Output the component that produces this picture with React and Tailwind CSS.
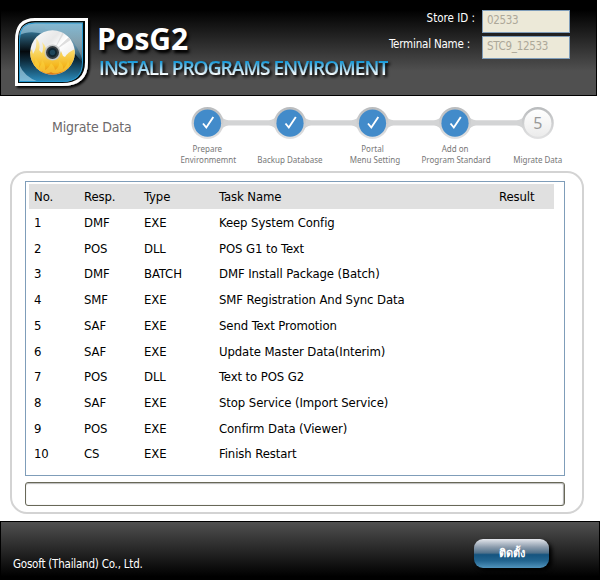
const tasks = [
  ['1', 'DMF', 'EXE', 'Keep System Config'],
  ['2', 'POS', 'DLL', 'POS G1 to Text'],
  ['3', 'DMF', 'BATCH', 'DMF Install Package (Batch)'],
  ['4', 'SMF', 'EXE', 'SMF Registration And Sync Data'],
  ['5', 'SAF', 'EXE', 'Send Text Promotion'],
  ['6', 'SAF', 'EXE', 'Update Master Data(Interim)'],
  ['7', 'POS', 'DLL', 'Text to POS G2'],
  ['8', 'SAF', 'EXE', 'Stop Service (Import Service)'],
  ['9', 'POS', 'EXE', 'Confirm Data (Viewer)'],
  ['10', 'CS', 'EXE', 'Finish Restart'],
];

const steps = [
  ['Prepare', 'Environmemnt', 'pl-[2px]'],
  ['', 'Backup Database', ''],
  ['Portal', 'Menu Setting', 'pl-[5px]'],
  ['Add on', 'Program Standard', 'pl-[2px]'],
  ['', 'Migrate Data', ''],
];

function Logo() {
  return (
    <svg className="h-[76px] w-[80px] shrink-0" viewBox="0 0 80 76">
      <defs>
        <linearGradient id="tile" x1="0" y1="0" x2="0" y2="1">
          <stop offset="0" stopColor="#8fbfd6" />
          <stop offset=".4" stopColor="#5e8ea6" />
          <stop offset=".62" stopColor="#1f4558" />
          <stop offset="1" stopColor="#2a91c7" />
        </linearGradient>
        <linearGradient id="sweep" x1="0" y1="0" x2="0" y2="1">
          <stop offset="0" stopColor="#2f6a88" />
          <stop offset=".38" stopColor="#04090d" />
          <stop offset=".55" stopColor="#0d2a3a" />
          <stop offset="1" stopColor="#2e93c6" />
        </linearGradient>
        <linearGradient id="gloss" x1="0" y1="0" x2="0" y2="1">
          <stop offset="0" stopColor="#7fbad6" />
          <stop offset=".4" stopColor="#8da8b4" />
          <stop offset="1" stopColor="#6d787f" />
        </linearGradient>
        <linearGradient id="fire" x1="0" y1="0" x2="0" y2="1">
          <stop offset="0" stopColor="#fbf0c0" />
          <stop offset=".4" stopColor="#f8d35a" />
          <stop offset=".7" stopColor="#f5b81f" />
          <stop offset=".87" stopColor="#e8901b" />
          <stop offset="1" stopColor="#c04f0c" />
        </linearGradient>
        <linearGradient id="disc" x1="0" y1="0" x2="1" y2="1">
          <stop offset="0" stopColor="#fff" />
          <stop offset=".35" stopColor="#e8e8e8" />
          <stop offset=".5" stopColor="#fff" />
          <stop offset="1" stopColor="#ddd" />
        </linearGradient>
        <clipPath id="tileClip"><path d="M20 4.5H68V44Q68 64 47 64H4V20.5Q4 4.5 20 4.5Z" /></clipPath>
        <clipPath id="discClip"><circle cx="37.5" cy="34.5" r="22.3" /></clipPath>
        <filter id="logoShadow"><feDropShadow dx="2" dy="2" stdDeviation="1.2" floodColor="#000" /></filter>
      </defs>
      <path filter="url(#logoShadow)" d="M20 1.5H71.5V44Q71.5 66.5 47 66.5H1.5V22Q1.5 1.5 20 1.5Z" fill="#050708" stroke="#fff" strokeWidth="3" />
      <g clipPath="url(#tileClip)">
        <rect x="3" y="3" width="66" height="62" fill="url(#tile)" />
        <path d="M3 18Q14 11 32 17Q52 24 60 36Q66 43 70 46V65H3Z" fill="url(#sweep)" />
        <path d="M30 5H69V48Q65 30 54 19Q46 12 30 11Z" fill="url(#gloss)" opacity=".7" />
        <path d="M4 46Q9 59 24 64H4Z" fill="#a9d4e8" opacity=".65" />
        <path d="M4.5 64V21Q4.5 5 20 5H67.5V44Q67.5 63.5 47 63.5H4" fill="none" stroke="#2497d0" />
      </g>
      <circle cx="37.5" cy="34.5" r="22.3" fill="url(#disc)" />
      <g clipPath="url(#discClip)">
        <path d="M38 34L49 11L51 12Z" fill="#dedede" />
        <path d="M38 34L55 18L57 21Z" fill="#dedede" />
        <path d="M14 36L17 31L18 36L20 32Q22 27 21 20Q26 25 24 32L27 35Q29 30 27 24Q32 29 32 37Q34 42 38 42Q42 42 44 38L46 33L48 38L50 39Q53 34 60 31V59H14Z" fill="url(#fire)" />
        <path d="M19 47Q21 44 20 40Q25 44 24 50Q27 46 27 42Q31 47 30 52Q34 50 36 45Q40 49 40 52Q45 49 44 43Q49 47 48 51Q52 48 53 42Q55 46 54 49Q49 54 45 54Q40 57 36 54Q31 57 27 53Q22 54 19 47Z" fill="#fbd03c" opacity=".65" />
      </g>
      <circle cx="37.5" cy="34.5" r="8" fill="#bfc2c2" opacity=".85" />
      <circle cx="37.5" cy="34.5" r="5.5" fill="#10242f" stroke="#363c40" strokeWidth="2" />
      <circle cx="37.5" cy="34.5" r="2.7" fill="#1f455a" />
    </svg>
  );
}

function StepTrack() {
  const centers = [41.5, 124, 206.5, 289, 371.8];
  return (
    <svg className="block h-[34px] w-[413px]" viewBox="0 0 413 34">
      <defs>
        <linearGradient id="ring" x1="0" y1="0" x2="0" y2="1">
          <stop offset="0" stopColor="#b9bbbd" />
          <stop offset="1" stopColor="#e2e2e3" />
        </linearGradient>
        <linearGradient id="pending" x1="0" y1="0" x2="0" y2="1">
          <stop offset="0" stopColor="#fff" />
          <stop offset="1" stopColor="#ebebeb" />
        </linearGradient>
      </defs>
      {centers.slice(0, 4).map((c, i) => (
        <path key={c} d={`M${c + 12} 8Q${c + 16} 14.2 ${c + 21} 14.2H${centers[i + 1] - 21}Q${centers[i + 1] - 16} 14.2 ${centers[i + 1] - 12} 8V26Q${centers[i + 1] - 16} 19.5 ${centers[i + 1] - 21} 19.5H${c + 21}Q${c + 16} 19.5 ${c + 12} 26Z`} fill="#d3d4d5" />
      ))}
      {centers.map((c, i) => (
        <g key={c}>
          <circle cx={c} cy="17" r="16" fill="url(#ring)" />
          <circle cx={c} cy="17.2" r="13.6" fill={i === 4 ? 'url(#pending)' : '#428bca'} />
          {i < 4 && <path d={`M${c - 4.5} 17.5L${c - 1.2} 21.5L${c + 5.8} 11`} fill="none" stroke="#fff" strokeWidth="1.9" />}
        </g>
      ))}
      <text x="371.8" y="22.8" textAnchor="middle" fontFamily="Noto Sans, sans-serif" fontSize="16" fill="#999" className="[font-stretch:normal]">5</text>
    </svg>
  );
}

function Field({ value }) {
  return (
    <div className="flex h-[23px] w-[88px] items-center border border-[#7f9db9] bg-[#ece9d8] px-[4px] pb-[1px] text-[11.5px] tracking-[-0.3px] text-[#aca899]">
      {value}
    </div>
  );
}

export default function App() {
  return (
    <div className="flex h-[580px] w-[600px] flex-col overflow-hidden bg-white font-['DejaVu_Sans_Condensed','DejaVu_Sans',sans-serif] text-[12px] [font-stretch:condensed]">
      <header className="flex h-[96px] w-[597px] items-start border border-black bg-[linear-gradient(#000_0px,#000_9px,#505050_70px,#505050_100%)]">
        <div className="flex pt-[17px] pl-[14px]"><Logo /></div>
        <div className="w-[300px] shrink-0 pt-[20px] pl-[2px] font-['Open_Sans',sans-serif] whitespace-nowrap [font-stretch:normal]">
          <div className="h-[35px] text-[30px] leading-[35px] font-bold text-white [text-shadow:2px_3px_3px_#000]">PosG2</div>
          <div className="[filter:drop-shadow(2px_2px_1.5px_#000)]">
            <div className="w-max bg-[linear-gradient(#1197d8_22%,#fff_78%)] bg-clip-text pl-[2px] text-[19px] leading-[24px] font-semibold tracking-[-0.92px] text-transparent [-webkit-text-stroke:0.2px_transparent]">INSTALL PROGRAMS ENVIROMENT</div>
          </div>
        </div>
        <div className="ml-auto flex shrink-0 flex-col gap-[3px] pt-[9px] pr-[26px] text-white">
          <div className="flex justify-end"><span className="mr-[7px] text-[11.5px] leading-[16px] whitespace-nowrap">Store ID :</span><Field value="02533" /></div>
          <div className="-ml-[20px] flex justify-end"><span className="mr-[12px] text-[11.5px] leading-[16px] tracking-[-0.2px] whitespace-nowrap">Terminal Name :</span><Field value="STC9_12533" /></div>
        </div>
      </header>

      <section className="flex h-[75px] shrink-0">
        <h1 className="w-[166px] shrink-0 pt-[22px] pl-[52px] text-[14px] leading-[18px] tracking-[-0.2px] whitespace-nowrap text-[#6d696b]">Migrate Data</h1>
        <div className="w-[413px] shrink-0 pt-[10px]">
          <StepTrack />
          <div className="grid grid-cols-5 pt-[3px] text-center font-['Noto_Sans',sans-serif] text-[8px] leading-[11px] whitespace-nowrap text-[#777]">
            {steps.map(([top, bottom, shift]) => (
              <div key={bottom}><div className="h-[11px]">{top}</div><div className={shift}>{bottom}</div></div>
            ))}
          </div>
        </div>
      </section>

      <main className="ml-[10px] flex h-[343px] w-[574px] shrink-0 flex-col rounded-[17px] border-2 border-[#d3d3d3] px-[13px] pt-[8px]">
        <div className="h-[295px] w-[540px] shrink-0 border border-[#7f9db9] pt-[2px] pl-[3px] text-[13px] tracking-[-0.1px] text-black">
          <div className="grid h-[25px] w-[525px] grid-cols-[50px_60px_75px_280px_1fr] items-center bg-[#e0e0e0] pl-[5px]">
            <span>No.</span><span>Resp.</span><span>Type</span><span>Task Name</span><span>Result</span>
          </div>
          <div className="pt-[1px]">
            {tasks.map(([no, resp, type, name]) => (
              <div key={no} className="grid h-[25.7px] w-[525px] grid-cols-[50px_60px_75px_1fr] items-center pl-[5px] whitespace-nowrap">
                <span>{no}</span><span>{resp}</span><span>{type}</span><span>{name}</span>
              </div>
            ))}
          </div>
        </div>
        <div className="mt-[6px] h-[24px] w-[540px] shrink-0 rounded-[3px] border border-[#686858] bg-white shadow-[inset_0_1px_1px_#bbb,inset_-1px_0_1px_#aaa]" />
      </main>

      <footer className="mt-[7px] flex h-[59px] w-[600px] shrink-0 justify-between border border-b-0 border-black bg-[linear-gradient(#505050,#000_94%)] text-white">
        <div className="pt-[34px] pl-[12px] text-[11.5px] leading-[16px] tracking-[-0.22px] whitespace-nowrap">Gosoft (Thailand) Co., Ltd.</div>
        <button className="mt-[17px] mr-[50px] flex h-[29px] w-[75px] items-center justify-center rounded-[9px] bg-[linear-gradient(#e4e6ec_0%,#8b9bac_28%,#50718b_48%,#15547f_54%,#22648f_75%,#5194bd_100%)] pt-[2px] text-[11px] font-bold shadow-[3px_3px_4px_#000]">ติดตั้ง</button>
      </footer>
    </div>
  );
}
